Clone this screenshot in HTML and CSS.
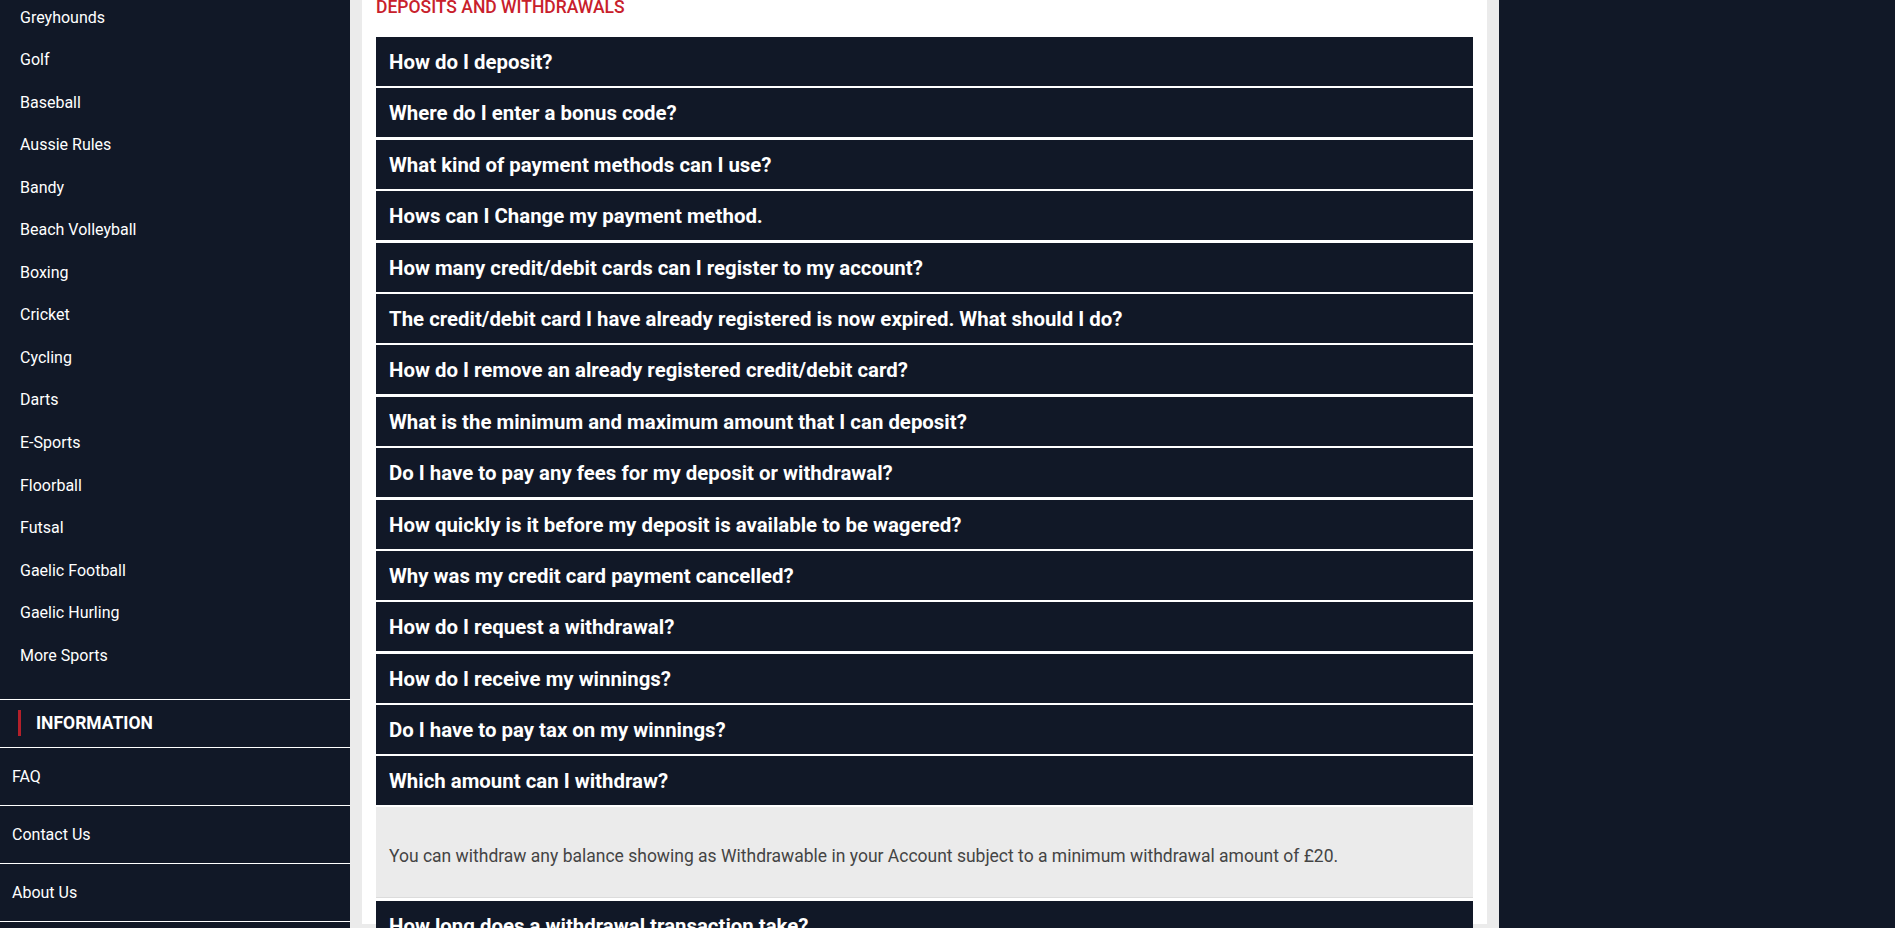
FILE: index.html
```html
<!DOCTYPE html>
<html lang="en">
<head>
  <meta charset="UTF-8" />
  <meta name="viewport" content="width=device-width, initial-scale=1.0"/>
  <title>FAQ - Deposits and Withdrawals</title>
  <link rel="stylesheet" href="styles.css">
</head>
<body>
  <div class="layout">
    <aside class="sidebar">
      <ul class="sports">
        <li>Greyhounds</li>
        <li>Golf</li>
        <li>Baseball</li>
        <li>Aussie Rules</li>
        <li>Bandy</li>
        <li>Beach Volleyball</li>
        <li>Boxing</li>
        <li>Cricket</li>
        <li>Cycling</li>
        <li>Darts</li>
        <li>E-Sports</li>
        <li>Floorball</li>
        <li>Futsal</li>
        <li>Gaelic Football</li>
        <li>Gaelic Hurling</li>
        <li>More Sports</li>
      </ul>

      <div class="info-title"><span>INFORMATION</span></div>
      <a class="info-link" href="#">FAQ</a>
      <a class="info-link" href="#">Contact Us</a>
      <a class="info-link" href="#">About Us</a>
    </aside>

    <main class="main">
      <div class="content">
        <h3 class="section-title">DEPOSITS AND WITHDRAWALS</h3>

        <div class="faq-q">How do I deposit?</div>
        <div class="faq-q">Where do I enter a bonus code?</div>
        <div class="faq-q">What kind of payment methods can I use?</div>
        <div class="faq-q">Hows can I Change my payment method.</div>
        <div class="faq-q">How many credit/debit cards can I register to my account?</div>
        <div class="faq-q">The credit/debit card I have already registered is now expired. What should I do?</div>
        <div class="faq-q">How do I remove an already registered credit/debit card?</div>
        <div class="faq-q">What is the minimum and maximum amount that I can deposit?</div>
        <div class="faq-q">Do I have to pay any fees for my deposit or withdrawal?</div>
        <div class="faq-q">How quickly is it before my deposit is available to be wagered?</div>
        <div class="faq-q">Why was my credit card payment cancelled?</div>
        <div class="faq-q">How do I request a withdrawal?</div>
        <div class="faq-q">How do I receive my winnings?</div>
        <div class="faq-q">Do I have to pay tax on my winnings?</div>
        <div class="faq-q open">Which amount can I withdraw?</div>
        <div class="faq-a">You can withdraw any balance showing as Withdrawable in your Account subject to a minimum withdrawal amount of £20.</div>
        <div class="faq-q">How long does a withdrawal transaction take?</div>
        <div class="faq-q">Can I cancel my withdrawal?</div>
      </div>
    </main>

    <div class="right"></div>
  </div>
</body>
</html>
```

FILE: styles.css
```css
body {
  margin: 0;
  background-color: #111827;
  color: #fff;
  font-family: Roboto, "Liberation Sans", sans-serif;
}
.layout {
  display: flex;
  height: 100vh;
  overflow: hidden;
}
.sidebar {
  width: 350px;
  flex-shrink: 0;
  background-color: #111827;
}
.sports {
  list-style: none;
  margin: -3.5px 0 21.7px;
  padding: 0;
}
.sports li {
  height: 42.55px;
  line-height: 42.55px;
  padding-left: 20px;
  font-size: 16px;
}
.info-title {
  border-top: 1px solid #fff;
  height: 47px;
  display: flex;
  align-items: center;
  padding-left: 18px;
}
.info-title span {
  border-left: 3px solid #b3202a;
  padding-left: 15px;
  height: 26px;
  line-height: 27px;
  font-size: 17.5px;
  font-weight: 700;
}
.info-link {
  display: block;
  border-top: 1px solid #fff;
  height: 57px;
  line-height: 57px;
  padding-left: 12px;
  font-size: 16px;
  color: #fff;
  text-decoration: none;
}
.info-link:last-child {
  border-bottom: 1px solid #fff;
}
.main {
  width: 1149px;
  flex-shrink: 0;
  background-color: #ebebeb;
  padding: 0 12px;
  box-sizing: border-box;
}
.content {
  background-color: #fff;
  height: 100%;
  padding: 0 14px;
}
.section-title {
  margin: -4px 0 19px;
  font-size: 17.5px;
  line-height: 22px;
  font-weight: 500;
  color: #c8202b;
}
.faq-q {
  background-color: #111827;
  height: 47px;
  line-height: 47px;
  padding: 2px 13px 0;
  margin-bottom: 2.4px;
  font-size: 20.4px;
  font-weight: 700;
  white-space: nowrap;
  overflow: hidden;
}
.faq-q.open {
  margin-bottom: 2px;
}
.faq-a {
  background-color: #ebebeb;
  border-bottom: 1px solid #dcdcdc;
  height: 91px;
  margin-bottom: 3px;
  padding: 37px 13px 0;
  box-sizing: border-box;
  line-height: 24px;
  font-size: 17.5px;
  color: #444;
}
.right {
  flex: 1;
  background-color: #111827;
}
```
